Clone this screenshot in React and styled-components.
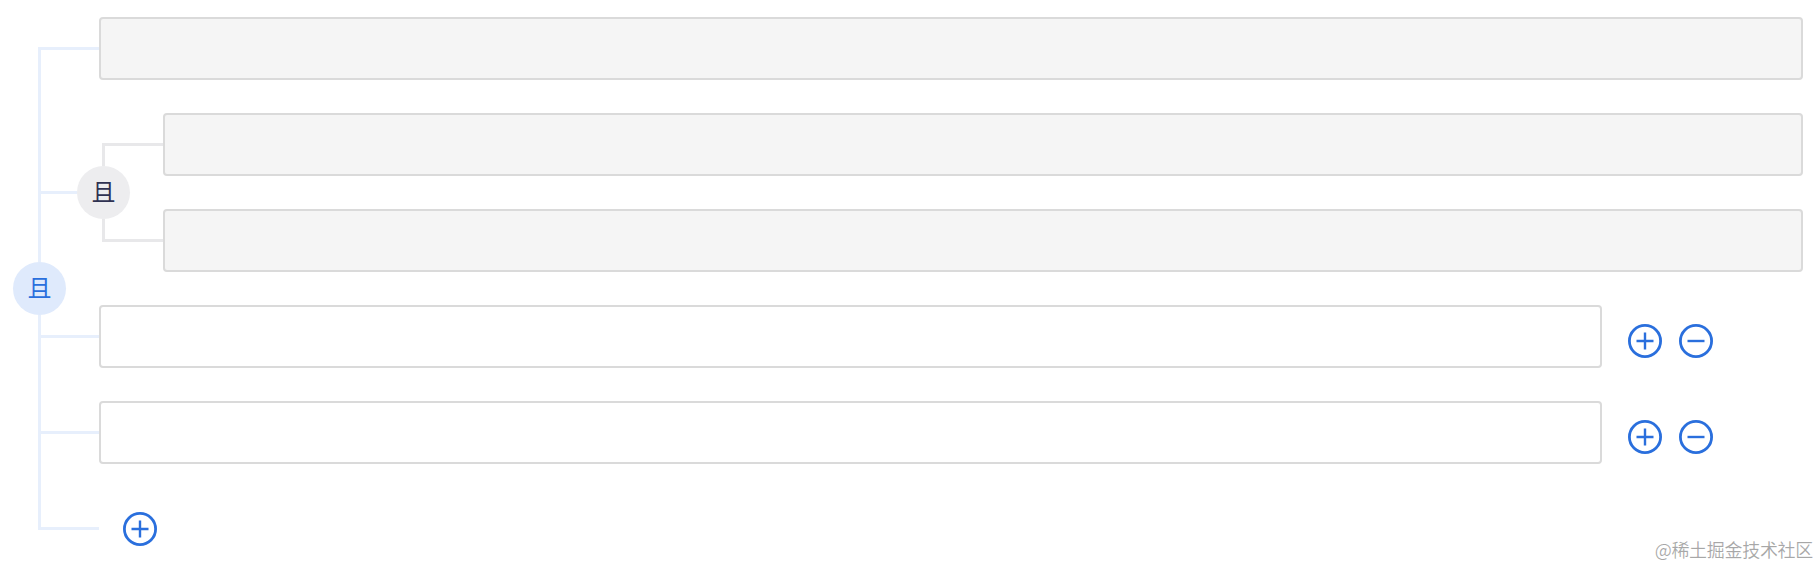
import React from 'react';
import styled, { createGlobalStyle } from 'styled-components';

const GlobalStyle = createGlobalStyle`
  html, body {
    margin: 0;
    padding: 0;
    background: #ffffff;
  }
  body {
    font-family: "Noto Sans", "Noto Sans CJK SC", sans-serif;
  }
`;

const BLUE = '#2a6fdd';
const MAIN_LINE = '#e7effc';
const SUB_LINE = '#e8e8ea';

const Page = styled.div`
  position: relative;
  height: 566px;
  box-sizing: border-box;
  padding: 17px 17px 0 13px;
  overflow: hidden;
`;

const Group = styled.div`
  display: flex;
  align-items: stretch;
  flex: 1;
  min-width: 0;
`;

const RelationCol = styled.div`
  flex: none;
  width: 53px;
  display: flex;
  flex-direction: column;
  align-items: center;
`;

const Spacer = styled.div`
  flex: none;
  height: 30px;
`;

const VLine = styled.div`
  flex: 1;
  width: 3px;
  background: ${(p) => p.$color};
`;

const Relation = styled.div`
  flex: none;
  width: 53px;
  height: 53px;
  border-radius: 50%;
  background: ${(p) => (p.$main ? '#dfeafc' : '#ededef')};
  color: ${(p) => (p.$main ? BLUE : '#2f3252')};
  display: flex;
  align-items: center;
  justify-content: center;
  padding-bottom: 3px;
  box-sizing: border-box;
  font-family: "Noto Sans CJK SC", sans-serif;
  font-size: 24px;
  line-height: 1;
  user-select: none;
`;

const Items = styled.div`
  flex: 1;
  min-width: 0;
  display: flex;
  flex-direction: column;
  gap: 33px;
  margin-left: -25px;
`;

const Row = styled.div`
  display: flex;
  align-items: center;
  min-height: ${(p) => (p.$group ? 'auto' : '63px')};
`;

const Stub = styled.div`
  flex: none;
  width: ${(p) => p.$w}px;
  height: 3px;
  background: ${(p) => p.$color};
  align-self: center;
`;

const Field = styled.div`
  flex: 1;
  min-width: 0;
  height: 63px;
  box-sizing: border-box;
  border: 2px solid #dadada;
  border-radius: 4px;
  background: ${(p) => (p.$disabled ? '#f5f5f5' : '#ffffff')};
`;

const Actions = styled.div`
  flex: none;
  width: 201px;
  box-sizing: border-box;
  padding-left: 26px;
  margin-top: 8px;
  display: flex;
  align-items: center;
  gap: 17px;
`;

const IconButton = styled.button`
  flex: none;
  width: 34px;
  height: 34px;
  padding: 0;
  margin: ${(p) => (p.$add ? '0 0 0 24px' : '0')};
  border: none;
  background: transparent;
  color: ${BLUE};
  cursor: pointer;
  display: flex;
  align-items: center;
  justify-content: center;
  svg {
    display: block;
  }
`;

const Watermark = styled.div`
  position: absolute;
  right: 7px;
  bottom: 5px;
  font-family: "Noto Sans CJK SC", sans-serif;
  font-size: 18px;
  line-height: 24px;
  color: rgba(0, 0, 0, 0.34);
  letter-spacing: -0.3px;
`;

const PlusIcon = () => (
  <svg width="34" height="34" viewBox="0 0 34 34" fill="none">
    <circle cx="17" cy="17" r="15.6" stroke="currentColor" strokeWidth="2.8" />
    <path d="M8.5 17h17M17 8.5v17" stroke="currentColor" strokeWidth="2.4" />
  </svg>
);

const MinusIcon = () => (
  <svg width="34" height="34" viewBox="0 0 34 34" fill="none">
    <circle cx="17" cy="17" r="15.6" stroke="currentColor" strokeWidth="2.8" />
    <path d="M8.5 17h17" stroke="currentColor" strokeWidth="2.4" />
  </svg>
);

const Relations = ({ main }) => (
  <RelationCol>
    <Spacer />
    <VLine $color={main ? MAIN_LINE : SUB_LINE} />
    <Relation $main={main}>且</Relation>
    <VLine $color={main ? MAIN_LINE : SUB_LINE} />
    <Spacer />
  </RelationCol>
);

export default function App() {
  return (
    <>
      <GlobalStyle />
      <Page>
        <Group>
          <Relations main />
          <Items>
            <Row>
              <Stub $w={58} $color={MAIN_LINE} />
              <Field $disabled />
            </Row>
            <Row $group>
              <Stub $w={36} $color={MAIN_LINE} />
              <Group>
                <Relations />
                <Items>
                  <Row>
                    <Stub $w={58} $color={SUB_LINE} />
                    <Field $disabled />
                  </Row>
                  <Row>
                    <Stub $w={58} $color={SUB_LINE} />
                    <Field $disabled />
                  </Row>
                </Items>
              </Group>
            </Row>
            <Row>
              <Stub $w={58} $color={MAIN_LINE} />
              <Field />
              <Actions>
                <IconButton aria-label="add"><PlusIcon /></IconButton>
                <IconButton aria-label="remove"><MinusIcon /></IconButton>
              </Actions>
            </Row>
            <Row>
              <Stub $w={58} $color={MAIN_LINE} />
              <Field />
              <Actions>
                <IconButton aria-label="add"><PlusIcon /></IconButton>
                <IconButton aria-label="remove"><MinusIcon /></IconButton>
              </Actions>
            </Row>
            <Row>
              <Stub $w={58} $color={MAIN_LINE} />
              <IconButton $add aria-label="add condition"><PlusIcon /></IconButton>
            </Row>
          </Items>
        </Group>
        <Watermark>@稀土掘金技术社区</Watermark>
      </Page>
    </>
  );
}
